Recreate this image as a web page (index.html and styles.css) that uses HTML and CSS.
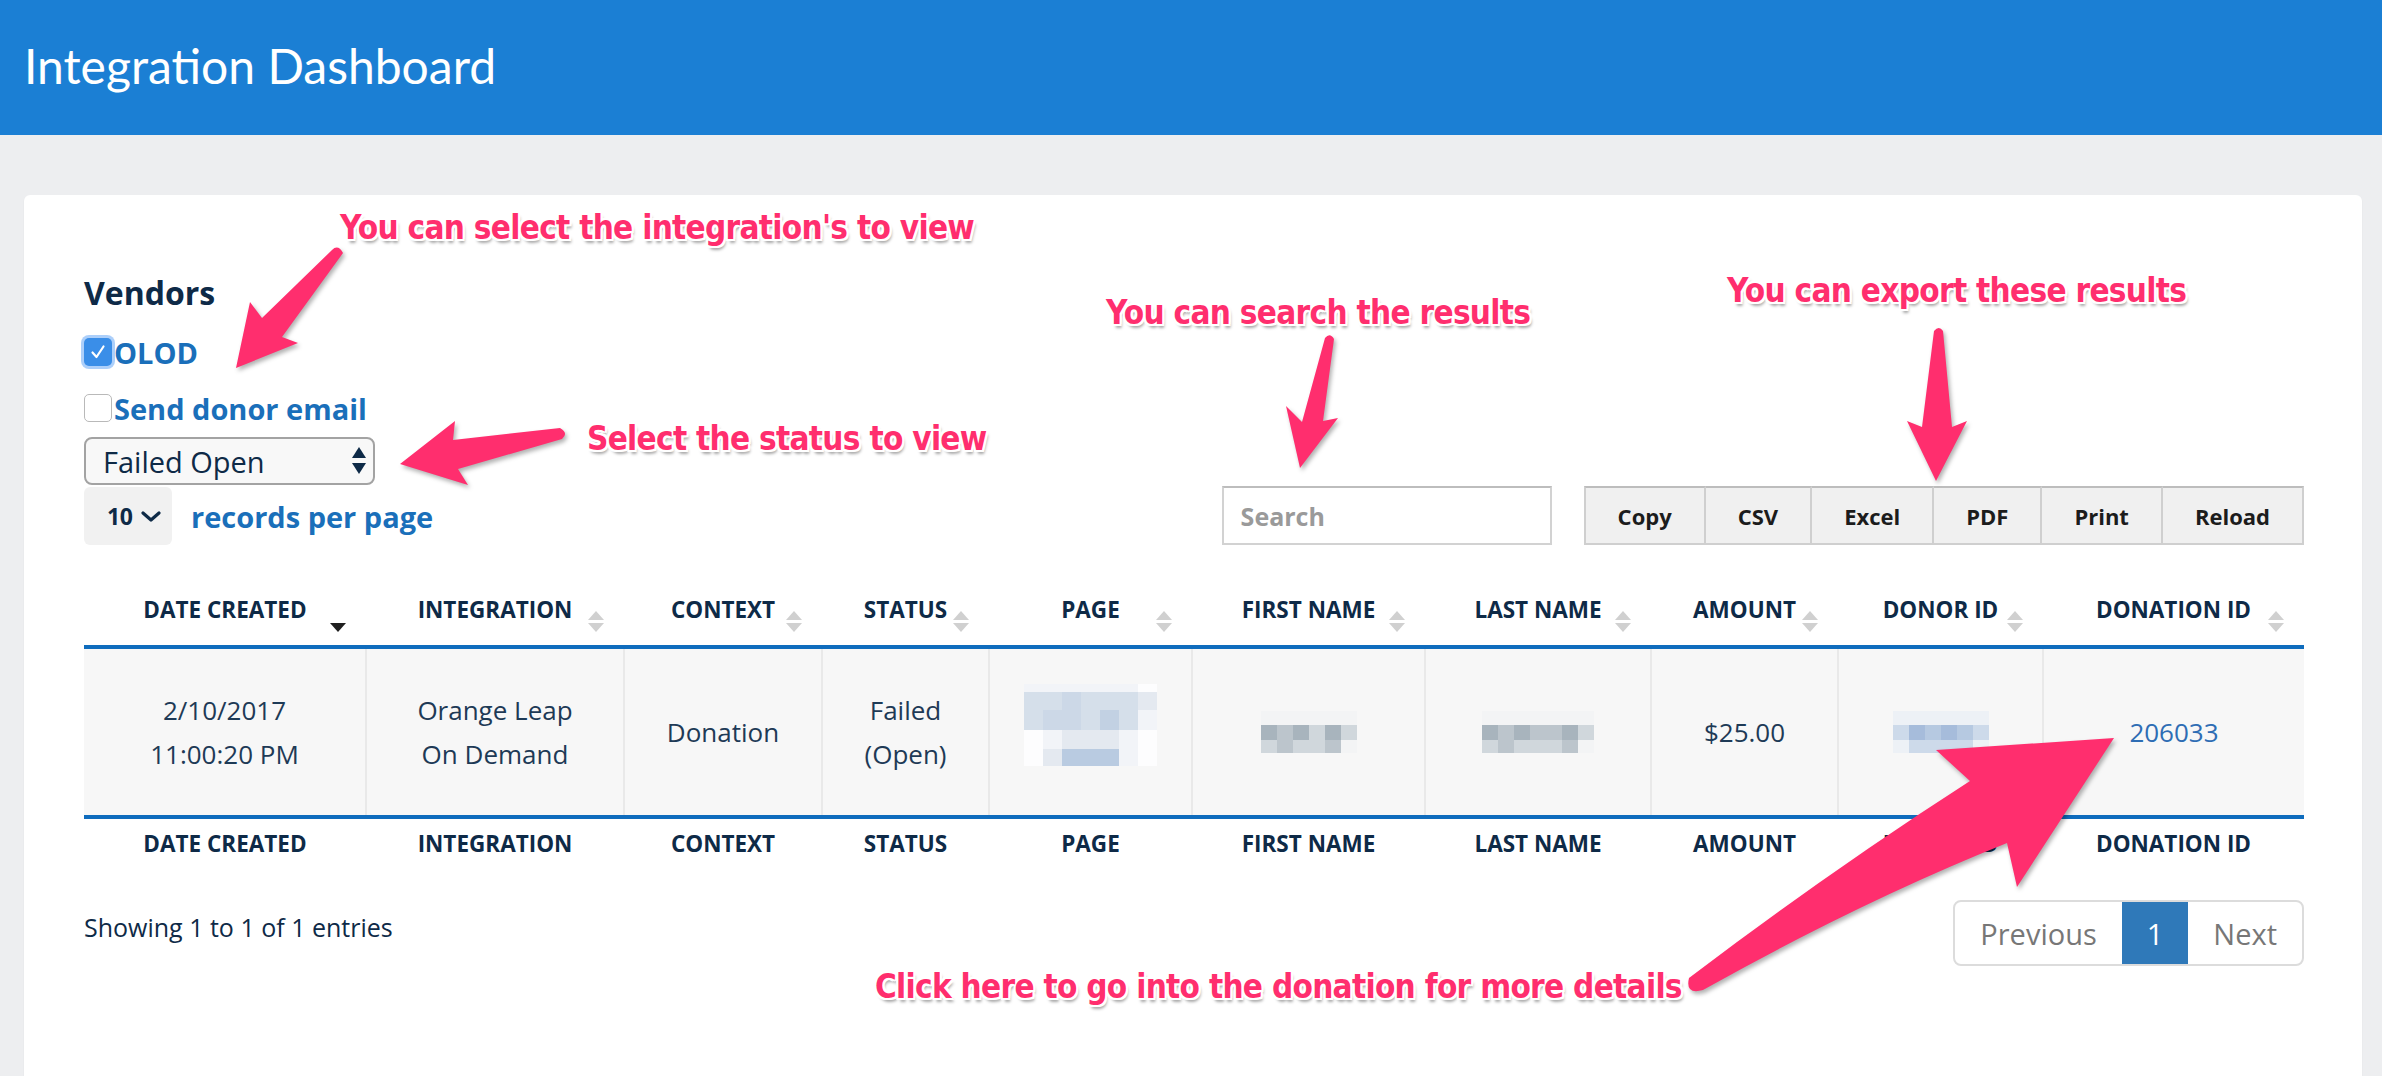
FILE: index.html
```html
<!DOCTYPE html>
<html lang="en">
<head>
<meta charset="utf-8">
<title>Integration Dashboard</title>
<link rel="stylesheet" href="styles.css">
</head>
<body>
<header class="topbar"><h1 class="title">Integration Dashboard</h1></header>

<main class="card">
  <div class="controls">
    <div class="filters">
      <h3 class="vendors">Vendors</h3>
      <label class="check-row first">
        <span class="cb checked"><svg viewBox="0 0 20 20" class="tick"><path d="M4.5 10.5 L8.5 15 L15.5 4.5" fill="none" stroke="#fff" stroke-width="2.2" stroke-linecap="round" stroke-linejoin="round"/></svg></span>
        <span class="check-label">OLOD</span>
      </label>
      <label class="check-row second">
        <span class="cb"></span>
        <span class="check-label">Send donor email</span>
      </label>
      <div class="select">
        <span>Failed Open</span>
        <svg class="updown" viewBox="0 0 14 28"><polygon points="0,11 7,0 14,11" fill="#0e2a47"/><polygon points="0,16 14,16 7,27" fill="#0e2a47"/></svg>
      </div>
      <div class="length">
        <span class="len-box"><span class="len-num">10</span><svg class="chev" viewBox="0 0 20 11"><path d="M2 2 L10 9 L18 2" fill="none" stroke="#0e2a47" stroke-width="3.2" stroke-linecap="round" stroke-linejoin="round"/></svg></span>
        <span class="len-label">records per page</span>
      </div>
    </div>
    <div class="tools">
      <div class="search">Search</div>
      <div class="btn-group">
        <span class="btn">Copy</span><span class="btn">CSV</span><span class="btn">Excel</span><span class="btn">PDF</span><span class="btn">Print</span><span class="btn">Reload</span>
      </div>
    </div>
  </div>

  <table class="grid">
    <colgroup>
      <col class="c1"><col class="c2"><col class="c3"><col class="c4"><col class="c5"><col class="c6"><col class="c7"><col class="c8"><col class="c9"><col class="c10">
    </colgroup>
    <thead>
      <tr>
        <th>Date Created<svg class="sort desc" viewBox="0 0 16 9"><polygon points="0,0 16,0 8,9" fill="#1f1f1f"/></svg></th>
        <th>Integration<svg class="sort" viewBox="0 0 16 21"><polygon points="0,9 8,0 16,9"/><polygon points="0,12 16,12 8,21"/></svg></th>
        <th>Context<svg class="sort" viewBox="0 0 16 21"><polygon points="0,9 8,0 16,9"/><polygon points="0,12 16,12 8,21"/></svg></th>
        <th>Status<svg class="sort" viewBox="0 0 16 21"><polygon points="0,9 8,0 16,9"/><polygon points="0,12 16,12 8,21"/></svg></th>
        <th>Page<svg class="sort" viewBox="0 0 16 21"><polygon points="0,9 8,0 16,9"/><polygon points="0,12 16,12 8,21"/></svg></th>
        <th>First Name<svg class="sort" viewBox="0 0 16 21"><polygon points="0,9 8,0 16,9"/><polygon points="0,12 16,12 8,21"/></svg></th>
        <th>Last Name<svg class="sort" viewBox="0 0 16 21"><polygon points="0,9 8,0 16,9"/><polygon points="0,12 16,12 8,21"/></svg></th>
        <th>Amount<svg class="sort" viewBox="0 0 16 21"><polygon points="0,9 8,0 16,9"/><polygon points="0,12 16,12 8,21"/></svg></th>
        <th>Donor ID<svg class="sort" viewBox="0 0 16 21"><polygon points="0,9 8,0 16,9"/><polygon points="0,12 16,12 8,21"/></svg></th>
        <th>Donation ID<svg class="sort" viewBox="0 0 16 21"><polygon points="0,9 8,0 16,9"/><polygon points="0,12 16,12 8,21"/></svg></th>
      </tr>
    </thead>
    <tbody>
      <tr>
        <td>2/10/2017<br>11:00:20 PM</td>
        <td>Orange Leap<br>On Demand</td>
        <td>Donation</td>
        <td>Failed<br>(Open)</td>
        <td>
          <div class="blur page-blur">
            <span class="p1"></span><span class="p1"></span><span class="p1"></span><span class="p1"></span><span class="p1"></span><span class="p1"></span><span class="p0"></span>
            <span class="p3"></span><span class="p3"></span><span class="p4"></span><span class="p3"></span><span class="p3"></span><span class="p3"></span><span class="p2"></span>
            <span class="p3"></span><span class="p4"></span><span class="p4"></span><span class="p3"></span><span class="p5"></span><span class="p3"></span><span class="p1"></span>
            <span class="p0"></span><span class="p1"></span><span class="p2"></span><span class="p2"></span><span class="p2"></span><span class="p1"></span><span class="p0"></span>
            <span class="p0"></span><span class="p2"></span><span class="p6"></span><span class="p6"></span><span class="p6"></span><span class="p1"></span><span class="p0"></span>
          </div>
        </td>
        <td>
          <div class="blur name-blur six">
            <span class="g0"></span><span class="g0"></span><span class="g0"></span><span class="g0"></span><span class="g0"></span><span class="g0"></span>
            <span class="g3"></span><span class="g2"></span><span class="g3"></span><span class="g1"></span><span class="g3"></span><span class="g1"></span>
            <span class="g1"></span><span class="g2"></span><span class="g1"></span><span class="g1"></span><span class="g2"></span><span class="g0"></span>
          </div>
        </td>
        <td>
          <div class="blur name-blur seven">
            <span class="g0"></span><span class="g0"></span><span class="g0"></span><span class="g0"></span><span class="g0"></span><span class="g0"></span><span class="g0"></span>
            <span class="g3"></span><span class="g2"></span><span class="g3"></span><span class="g2"></span><span class="g2"></span><span class="g3"></span><span class="g1"></span>
            <span class="g1"></span><span class="g2"></span><span class="g1"></span><span class="g1"></span><span class="g1"></span><span class="g2"></span><span class="g0"></span>
          </div>
        </td>
        <td>$25.00</td>
        <td>
          <div class="blur name-blur six">
            <span class="b0"></span><span class="b0"></span><span class="b0"></span><span class="b0"></span><span class="b0"></span><span class="b0"></span>
            <span class="b1"></span><span class="b3"></span><span class="b2"></span><span class="b3"></span><span class="b2"></span><span class="b1"></span>
            <span class="b0"></span><span class="b1"></span><span class="b1"></span><span class="b1"></span><span class="b1"></span><span class="b0"></span>
          </div>
        </td>
        <td><a class="link" href="#">206033</a></td>
      </tr>
    </tbody>
    <tfoot>
      <tr>
        <th>Date Created</th><th>Integration</th><th>Context</th><th>Status</th><th>Page</th><th>First Name</th><th>Last Name</th><th>Amount</th><th>Donor ID</th><th>Donation ID</th>
      </tr>
    </tfoot>
  </table>

  <div class="table-footer">
    <div class="info">Showing 1 to 1 of 1 entries</div>
    <div class="pager">
      <span class="pg">Previous</span><span class="pg active">1</span><span class="pg">Next</span>
    </div>
  </div>
</main>

<div class="annotations">
  <svg class="arrows" viewBox="0 0 2382 1076" width="2382" height="1076">
    <g fill="#ff2e6e">
      <path d="M332 250 Q338 244 343 253 L282 337 L298 343 L236 368 L250 302 L262 318 Z"/>
      <path d="M400 464 L455 421 L453 440 L560 428 Q569 433 562 439 L458 469 L468 485 Z"/>
      <path d="M1325 338 Q1330 332 1334 339 L1323 421 L1338 418 L1300 468 L1286 406 L1302 422 Z"/>
      <path d="M1934 331 Q1939 325 1943 331 L1952 427 L1967 421 L1936 481 L1907 421 L1922 427 Z"/>
      <path d="M2114 738 L2017 887 L2007 843 Q1860 902 1703 990 Q1685 995 1689 978 Q1830 871 1970 781 L1936 750 Z"/>
    </g>
  </svg>
  <div class="note n1">You can select the integration's to view</div>
  <div class="note n2">Select the status to view</div>
  <div class="note n3">You can search the results</div>
  <div class="note n4">You can export these results</div>
  <div class="note n5">Click here to go into the donation for more details</div>
</div>
</body>
</html>
```

FILE: styles.css
```css
* { box-sizing: border-box; }

html, body {
  margin: 0;
  padding: 0;
  overflow: hidden;
}

body {
  position: relative;
  width: 2382px;
  height: 1076px;
  background: #edeef0;
  font-family: "Open Sans", "Lato", sans-serif;
  color: #0e2a47;
}

/* ---------- top bar ---------- */
.topbar {
  height: 135px;
  background: #1b7fd4;
  display: flex;
  align-items: center;
  padding: 0 0 4px 24px;
}

.title {
  margin: 0;
  font-family: "Lato", "Open Sans", sans-serif;
  font-size: 48px;
  font-weight: 400;
  line-height: 1;
  color: #fff;
}

/* ---------- card ---------- */
.card {
  display: block;
  margin: 60px 20px 0 24px;
  height: 1000px;
  background: #fff;
  border-radius: 6px;
  padding: 80px 58px 0 60px;
  box-shadow: 0 1px 2px rgba(0, 0, 0, 0.06);
}

.controls {
  display: flex;
  justify-content: space-between;
  align-items: flex-end;
}

.filters {
  display: flex;
  flex-direction: column;
  align-items: flex-start;
}

.vendors {
  margin: 0;
  font-size: 32px;
  line-height: 36px;
  font-weight: 700;
  color: #0e2a47;
}

.check-row {
  display: flex;
  align-items: center;
  gap: 2px;
  height: 40px;
  font-size: 29px;
  font-weight: 700;
  color: #1a6fba;
}

.check-row.first { margin-top: 21px; }
.check-row.second { margin-top: 16px; }

.cb {
  width: 28px;
  height: 28px;
  border-radius: 5px;
  border: 1.5px solid #b9b9b9;
  background: #fff;
  display: flex;
  align-items: center;
  justify-content: center;
}

.cb.checked {
  border: none;
  background: #3a8ee8;
  box-shadow: 0 0 0 3px rgba(90, 160, 245, 0.5);
}

.tick { width: 20px; height: 20px; }

.select {
  margin-top: 9px;
  width: 291px;
  height: 48px;
  border: 2px solid #a3a3a3;
  border-radius: 8px;
  background: #f8f8f8;
  display: flex;
  align-items: center;
  justify-content: space-between;
  padding: 0 7px 0 17px;
  font-size: 29px;
  color: #0e2a47;
}

.updown { width: 14px; height: 28px; }

.length {
  margin-top: 2px;
  display: flex;
  align-items: center;
  gap: 19px;
}

.len-box {
  width: 88px;
  height: 58px;
  background: #f1f1f1;
  border-radius: 6px;
  display: flex;
  align-items: center;
  padding-left: 23px;
  gap: 9px;
}

.len-num {
  font-size: 23px;
  font-weight: 700;
  letter-spacing: -0.5px;
  color: #0e2a47;
}

.chev { width: 20px; height: 11px; }

.len-label {
  font-size: 29px;
  font-weight: 700;
  color: #1a6fba;
}

.tools {
  display: flex;
  align-items: flex-end;
  gap: 32px;
}

.search {
  width: 330px;
  height: 59px;
  border: 2px solid #d2d2d2;
  border-top-color: #bdbdbd;
  display: flex;
  align-items: center;
  padding-left: 17px;
  font-size: 25px;
  font-weight: 700;
  color: #9a9a9a;
}

.btn-group {
  display: flex;
  height: 59px;
}

.btn {
  display: flex;
  align-items: center;
  padding: 0 32px;
  background: #f0f0f0;
  border: 2px solid #cfcfcf;
  border-top-color: #bdbdbd;
  border-left-width: 0;
  font-size: 22px;
  font-weight: 700;
  color: #1c1c1c;
}

.btn:first-child { border-left-width: 2px; }

/* ---------- table ---------- */
.grid {
  margin-top: 28px;
  width: 100%;
  border-collapse: collapse;
  table-layout: fixed;
}

.c1 { width: 282px; }
.c2 { width: 258px; }
.c3 { width: 198px; }
.c4 { width: 167px; }
.c5 { width: 203px; }
.c6 { width: 233px; }
.c7 { width: 226px; }
.c8 { width: 187px; }
.c9 { width: 205px; }
.c10 { width: 261px; }

.grid th {
  position: relative;
  padding: 0;
  text-align: center;
  vertical-align: middle;
  font-size: 22.5px;
  font-weight: 700;
  text-transform: uppercase;
  color: #0e2a47;
}

.grid thead th {
  height: 74px;
  border-bottom: 4px solid #0f6cbd;
}

.grid tfoot th {
  height: 50px;
  border-top: 4px solid #0f6cbd;
}

.sort {
  position: absolute;
  right: 20px;
  bottom: 13px;
  width: 16px;
  height: 21px;
  fill: #d0d0d0;
}

.sort.desc { height: 9px; }

.grid td {
  height: 170px;
  padding: 0;
  background: #f7f7f7;
  border-left: 2px solid #e9e9e9;
  text-align: center;
  vertical-align: middle;
  font-size: 26px;
  line-height: 44px;
  color: #1e3a56;
}

.grid td:first-child { border-left: none; }

.link {
  color: #2e6db4;
  text-decoration: none;
}

.blur {
  display: inline-grid;
  vertical-align: middle;
}

.page-blur {
  grid-template-columns: repeat(7, 19px);
  grid-template-rows: 8px 18px 20px 19px 17px;
  margin-top: -14px;
}

.name-blur {
  grid-template-rows: 14px 15px 13px;
  margin-top: -6px;
}

.name-blur.six { grid-template-columns: repeat(6, 16px); }
.name-blur.seven { grid-template-columns: repeat(7, 16px); }

.p0 { background: #fdfdfe; }
.p1 { background: #f2f4f8; }
.p2 { background: #e4e9f0; }
.p3 { background: #d5dfea; }
.p4 { background: #ccd8e7; }
.p5 { background: #c2d1e3; }
.p6 { background: #b9cbe1; }

.g0 { background: #f3f4f5; }
.g1 { background: #d0d7dc; }
.g2 { background: #bcc5cc; }
.g3 { background: #a8b4bd; }

.b0 { background: #edf1f6; }
.b1 { background: #cddaea; }
.b2 { background: #b6c9e1; }
.b3 { background: #a6bcdb; }

/* ---------- footer ---------- */
.table-footer {
  display: flex;
  justify-content: space-between;
  align-items: flex-start;
  padding-top: 33px;
}

.info {
  margin-top: 12px;
  font-size: 25px;
  line-height: 30px;
  color: #0e2a47;
}

.pager {
  display: flex;
  height: 66px;
  border: 2px solid #dcdcdc;
  border-radius: 8px;
  overflow: hidden;
}

.pg {
  display: flex;
  align-items: center;
  padding: 0 25px;
  font-size: 29px;
  color: #777;
}

.pg.active {
  background: #2f79b9;
  color: #fff;
}

/* ---------- annotations overlay ---------- */
.annotations {
  position: absolute;
  left: 0;
  top: 0;
  width: 2382px;
  height: 1076px;
  pointer-events: none;
}

.arrows {
  position: absolute;
  left: 0;
  top: 0;
  filter: drop-shadow(2px 3px 2px rgba(0, 0, 0, 0.3));
}

.note {
  position: absolute;
  white-space: nowrap;
  font-family: "Liberation Sans Narrow", "DejaVu Sans Condensed", "Arial Narrow", sans-serif;
  font-stretch: condensed;
  font-weight: 700;
  font-size: 33px;
  letter-spacing: -0.7px;
  line-height: 1;
  color: #ff2e6e;
  text-shadow:
    2px 0 0 #fff, -2px 0 0 #fff, 0 2px 0 #fff, 0 -2px 0 #fff,
    2px 2px 0 #fff, -2px -2px 0 #fff, 2px -2px 0 #fff, -2px 2px 0 #fff,
    2px 4px 3px rgba(0, 0, 0, 0.35);
}

.n1 { left: 340px; top: 211px; }
.n2 { left: 587px; top: 422px; }
.n3 { left: 1106px; top: 296px; }
.n4 { left: 1727px; top: 274px; }
.n5 { left: 875px; top: 970px; }
```
